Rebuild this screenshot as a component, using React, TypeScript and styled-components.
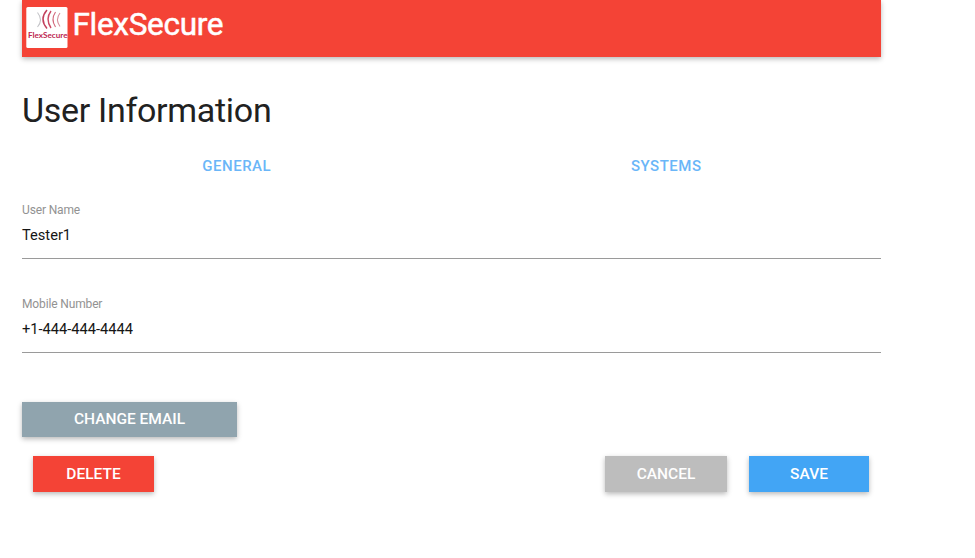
import React from "react";
import styled, { createGlobalStyle } from "styled-components";

const GlobalStyle = createGlobalStyle`
  * { box-sizing: border-box; }
  body { margin: 0; background: #fff; font-family: Roboto, "Liberation Sans", sans-serif; }
`;

const Page = styled.main`
  width: 859px;
  margin-left: 22px;
  padding-bottom: 24px;
  display: flex;
  flex-direction: column;
`;

const Header = styled.header`
  height: 56.5px;
  background: #f44336;
  box-shadow: 0 2px 5px rgba(0, 0, 0, 0.28);
  display: flex;
  align-items: flex-start;
  padding: 7px 0 0 4px;
`;

const Logo = styled.svg`
  width: 42px;
  height: 41px;
  display: block;
`;

const Brand = styled.span`
  margin: 0 0 0 4.5px;
  color: #fff;
  font-size: 31.5px;
  line-height: 36px;
  font-weight: 400;
  letter-spacing: -0.3px;
  -webkit-text-stroke: 0.5px #fff;
`;

const Title = styled.h1`
  margin: 33.5px 0 0;
  font-size: 34px;
  line-height: 40px;
  font-weight: 400;
  letter-spacing: -0.3px;
  color: #212121;
`;

const Tabs = styled.nav`
  display: grid;
  grid-template-columns: 1fr 1fr;
  margin-top: 24px;
  height: 24px;
`;

const Tab = styled.button`
  border: 0;
  padding: 0;
  background: none;
  color: #6ab6f8;
  font: 500 15px/24px Roboto, sans-serif;
  letter-spacing: 0.5px;
`;

const Field = styled.label`
  display: flex;
  flex-direction: column;
  height: 57px;
  margin: 24px 0 13px;
  border-bottom: 1px solid #9a9a9a;
`;

const Caption = styled.span`
  font-size: 12px;
  letter-spacing: -0.14px;
  line-height: 16px;
  color: #929292;
`;

const Value = styled.span`
  margin-top: 7px;
  font-size: 14.65px;
  line-height: 20px;
  color: #151515;
`;

const Button = styled.button<{ $bg: string; $width: number }>`
  width: ${(p) => p.$width}px;
  height: 35px;
  border: 0;
  padding: 0;
  background: ${(p) => p.$bg};
  box-shadow: 0 2px 5px rgba(0, 0, 0, 0.28);
  color: #fff;
  font: 500 15.5px/35px Roboto, sans-serif;
`;

const EmailRow = styled.div`
  display: flex;
  margin-top: 36px;
`;

const Actions = styled.div`
  display: flex;
  gap: 22px;
  margin-top: 19px;
  padding: 0 12px 0 11px;

  ${Button} {
    height: 36px;
    padding-top: 1px;
  }
`;

const Spacer = styled.div`
  flex: 1;
`;

export default function App() {
  return (
    <>
      <GlobalStyle />
      <Page>
        <Header>
          <Logo viewBox="0 0 42 41">
            <rect x="0.3" width="41.2" height="41" rx="1.5" fill="#fff" />
            <g fill="none" strokeWidth="1.1">
              <path d="M11.5 5.5q6 7.5 0 14.5" stroke="#c4c4c8" />
              <path d="M21 3q-8 9 0 18.5" stroke="#c2405c" strokeWidth="1.5" />
              <path d="M25 4q-6 8 0 17" stroke="#cc4a64" strokeWidth="1.4" />
              <path d="M29.5 5q-5 7.5 0 15" stroke="#d2687c" />
              <path d="M34 6q-5 6.5 0 13.5" stroke="#d88e9b" />
            </g>
            <text x="2" y="30.5" fontSize="7.2" fontWeight="700" fill="#bd2450" textLength="39.5" lengthAdjust="spacingAndGlyphs" fontFamily="Lato, sans-serif">FlexSecure</text>
          </Logo>
          <Brand>FlexSecure</Brand>
        </Header>
        <Title>User Information</Title>
        <Tabs>
          <Tab>GENERAL</Tab>
          <Tab>SYSTEMS</Tab>
        </Tabs>
        <Field>
          <Caption>User Name</Caption>
          <Value>Tester1</Value>
        </Field>
        <Field>
          <Caption>Mobile Number</Caption>
          <Value>+1-444-444-4444</Value>
        </Field>
        <EmailRow>
          <Button $bg="#90a4ae" $width={215}>CHANGE EMAIL</Button>
        </EmailRow>
        <Actions>
          <Button $bg="#f44336" $width={121}>DELETE</Button>
          <Spacer />
          <Button $bg="#bdbdbd" $width={122}>CANCEL</Button>
          <Button $bg="#42a5f5" $width={120}>SAVE</Button>
        </Actions>
      </Page>
    </>
  );
}
